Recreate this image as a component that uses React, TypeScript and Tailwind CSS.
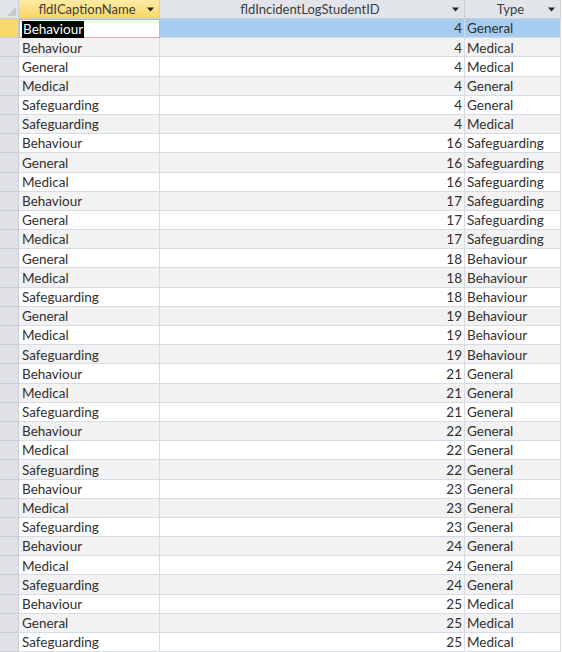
const rows: [string, number, string][] = [
  ["Behaviour", 4, "General"],
  ["Behaviour", 4, "Medical"],
  ["General", 4, "Medical"],
  ["Medical", 4, "General"],
  ["Safeguarding", 4, "General"],
  ["Safeguarding", 4, "Medical"],
  ["Behaviour", 16, "Safeguarding"],
  ["General", 16, "Safeguarding"],
  ["Medical", 16, "Safeguarding"],
  ["Behaviour", 17, "Safeguarding"],
  ["General", 17, "Safeguarding"],
  ["Medical", 17, "Safeguarding"],
  ["General", 18, "Behaviour"],
  ["Medical", 18, "Behaviour"],
  ["Safeguarding", 18, "Behaviour"],
  ["General", 19, "Behaviour"],
  ["Medical", 19, "Behaviour"],
  ["Safeguarding", 19, "Behaviour"],
  ["Behaviour", 21, "General"],
  ["Medical", 21, "General"],
  ["Safeguarding", 21, "General"],
  ["Behaviour", 22, "General"],
  ["Medical", 22, "General"],
  ["Safeguarding", 22, "General"],
  ["Behaviour", 23, "General"],
  ["Medical", 23, "General"],
  ["Safeguarding", 23, "General"],
  ["Behaviour", 24, "General"],
  ["Medical", 24, "General"],
  ["Safeguarding", 24, "General"],
  ["Behaviour", 25, "Medical"],
  ["General", 25, "Medical"],
  ["Safeguarding", 25, "Medical"],
];

function DropArrow() {
  return (
    <svg width="7" height="5" viewBox="0 0 7 5" className="shrink-0">
      <path d="M0 0.5h7L3.5 4.5z" fill="#222" />
    </svg>
  );
}

function HeaderCell({ label, yellow }: { label: string; yellow?: boolean }) {
  return (
    <div
      className={`flex h-[19px] items-center border-r border-b border-[#c9ced6] pl-2 pr-[5px] ${
        yellow ? "bg-gradient-to-b from-[#fdeba4] to-[#f9d660]" : "bg-[#e1e4e8]"
      }`}
    >
      <span className="flex-1 whitespace-nowrap text-center text-[13px] leading-[17px] text-[#3c3c3c]">
        {label}
      </span>
      <DropArrow />
    </div>
  );
}

export default function App() {
  return (
    <div
      className="h-[652px] w-[562px] overflow-hidden bg-white text-[13.5px] leading-none text-[#303030]"
      style={{ fontFamily: "Lato, 'Open Sans', sans-serif" }}
    >
      <div className="grid w-[561px] grid-cols-[19px_141px_305px_96px]">
        {/* header row */}
        <div className="relative h-[19px] border-r border-b border-[#c9ced6] bg-[#e1e4e8]">
          <svg width="9" height="9" viewBox="0 0 9 9" className="absolute right-[2px] bottom-[2px]">
            <path d="M9 0V9H0z" fill="#c6c9ce" />
          </svg>
        </div>
        <HeaderCell label="fldICaptionName" yellow />
        <HeaderCell label="fldIncidentLogStudentID" />
        <HeaderCell label="Type" />

        {rows.map(([caption, id, type], i) => {
          const selected = i === 0;
          const bg = selected ? "bg-[#a6cdf0]" : i % 2 === 1 ? "bg-[#f2f2f2]" : "bg-white";
          return (
            <div key={i} className="contents">
              <div
                className={`h-[19.2px] border-r border-b border-[#c9ced6] ${
                  selected ? "bg-[#fad96c]" : "bg-[#dfe1e5]"
                }`}
              />
              {selected ? (
                <div className="flex h-[19.2px] items-center border border-[#f2a3a5] bg-white pt-[2px] pl-[2px]">
                  <span className="bg-black px-px py-[2px] text-white">{caption}</span>
                </div>
              ) : (
                <div
                  className={`flex h-[19.2px] items-center border-r border-b border-[#d6dce5] pt-[2px] pl-[3px] ${bg}`}
                >
                  {caption}
                </div>
              )}
              <div
                className={`flex h-[19.2px] items-center justify-end border-r border-b border-[#d6dce5] pt-[2px] pr-[2px] ${bg}`}
              >
                {id}
              </div>
              <div
                className={`flex h-[19.2px] items-center border-r border-b border-[#d6dce5] pt-[2px] pl-[2px] ${bg}`}
              >
                {type}
              </div>
            </div>
          );
        })}
      </div>
    </div>
  );
}
